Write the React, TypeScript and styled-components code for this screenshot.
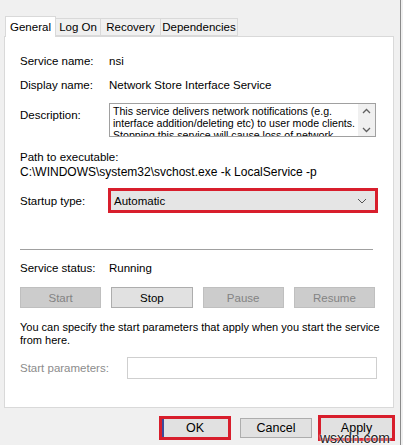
import React from "react";
import styled, { createGlobalStyle } from "styled-components";

const Global = createGlobalStyle`
  html, body { margin: 0; padding: 0; background: #f0f0f0; }
  body { font-family: "Liberation Sans", Arial, sans-serif; font-size: 11px; color: #000; }
`;

const Window = styled.div`
  position: relative;
  width: 401px;
  height: 445px;
  background: #f0f0f0;
  border-right: 1px solid #8a8a8a;
  padding-top: 16px;
  box-sizing: border-box;
  overflow: hidden;
`;

const TabStrip = styled.div`
  display: flex;
  align-items: flex-end;
  height: 20px;
  padding-left: 5px;
  position: relative;
  z-index: 2;
`;

const Tab = styled.div<{ $active?: boolean; $w: number }>`
  box-sizing: border-box;
  width: ${(p) => p.$w}px;
  height: ${(p) => (p.$active ? "21px" : "18px")};
  margin-bottom: ${(p) => (p.$active ? "-1px" : "0")};
  display: flex;
  align-items: center;
  justify-content: center;
  border: 1px solid #d9d9d9;
  border-bottom: ${(p) => (p.$active ? "none" : "1px solid #d9d9d9")};
  margin-left: -1px;
  background: ${(p) => (p.$active ? "#ffffff" : "#f0f0f0")};
  font-size: 11.5px;
  color: #000;
  white-space: nowrap;
`;

const Panel = styled.div`
  box-sizing: border-box;
  margin-left: 4px;
  width: 390px;
  height: 372px;
  background: #ffffff;
  border: 1px solid #d9d9d9;
  padding: 16px 18px 0 15px;
  display: flex;
  flex-direction: column;
`;

const Row = styled.div<{ $mt?: number; $align?: string }>`
  display: grid;
  grid-template-columns: 89px 1fr;
  align-items: ${(p) => p.$align || "center"};
  margin-top: ${(p) => p.$mt ?? 0}px;
  line-height: 16px;
`;

const Label = styled.div<{ $muted?: boolean; $pt?: number }>`
  color: ${(p) => (p.$muted ? "#8c8c8c" : "#000")};
  padding-top: ${(p) => p.$pt ?? 0}px;
  white-space: nowrap;
  font-size: 11.5px;
`;

const Value = styled.div`
  white-space: nowrap;
  font-size: 11.5px;
`;

const DescBox = styled.div`
  box-sizing: border-box;
  height: 34px;
  border: 1px solid #a0a0a0;
  display: flex;
  overflow: hidden;
  margin-right: -1px;
`;

const DescText = styled.div`
  flex: 1;
  padding: 1px 0 0 3px;
  line-height: 12px;
  font-size: 10.6px;
  overflow: hidden;
  white-space: nowrap;
`;

const ScrollBar = styled.div`
  width: 17px;
  background: #f0f0f0;
  display: flex;
  flex-direction: column;
  align-items: center;
  justify-content: space-between;
  padding: 4px 0 3px;
  box-sizing: border-box;
`;

const Block = styled.div<{ $mt?: number; $fs?: number }>`
  margin-top: ${(p) => p.$mt ?? 0}px;
  line-height: 15px;
  font-size: ${(p) => p.$fs ?? 11.5}px;
  white-space: nowrap;
`;

const Select = styled.div`
  box-sizing: border-box;
  height: 25px;
  border: 3px solid #d81e2c;
  margin-left: -1px;
  margin-right: -3px;
  background: #e5e5e5;
  display: flex;
  align-items: center;
  justify-content: space-between;
  padding: 0 8px 0 3px;
  font-size: 11.5px;
`;

const Separator = styled.div`
  margin-top: 36px;
  height: 1px;
  background: #a0a0a0;
  margin-right: 2px;
`;

const ButtonGrid = styled.div`
  display: grid;
  grid-template-columns: repeat(4, 1fr);
  column-gap: 10px;
  margin-top: 11px;
`;

const SvcButton = styled.div<{ $disabled?: boolean }>`
  box-sizing: border-box;
  height: 21px;
  display: flex;
  align-items: center;
  justify-content: center;
  background: ${(p) => (p.$disabled ? "#cccccc" : "#e1e1e1")};
  border: 1px solid ${(p) => (p.$disabled ? "#bfbfbf" : "#adadad")};
  color: ${(p) => (p.$disabled ? "#838383" : "#000")};
  font-size: 11.5px;
`;

const Para = styled.div`
  margin-top: 13px;
  line-height: 13px;
  font-size: 11px;
  white-space: nowrap;
`;

const ParamRow = styled.div`
  display: grid;
  grid-template-columns: 107px 1fr;
  align-items: center;
  margin-top: 10px;
`;

const ParamInput = styled.div`
  box-sizing: border-box;
  height: 22px;
  border: 1px solid #cfcfcf;
  background: #fff;
  margin-right: -2px;
`;

const Footer = styled.div`
  display: flex;
  justify-content: flex-end;
  align-items: center;
  padding-right: 5px;
  margin-top: 6px;
  height: 27px;
`;

const DlgButton = styled.div<{ $w: number; $h: number; $ring?: boolean; $ml?: number; $focus?: boolean }>`
  box-sizing: border-box;
  width: ${(p) => p.$w}px;
  height: ${(p) => p.$h}px;
  margin-left: ${(p) => p.$ml ?? 0}px;
  display: flex;
  align-items: center;
  justify-content: center;
  background: #e1e1e1;
  border: ${(p) => (p.$ring ? "3px solid #d81e2c" : "1px solid #adadad")};
  box-shadow: ${(p) => (p.$focus ? "inset 2px 0 0 #3b4a9a" : "none")};
  font-size: 12.5px;
  color: #000;
`;

const Watermark = styled.div`
  position: absolute;
  right: 10px;
  bottom: -1px;
  font-family: "Liberation Sans", Arial, sans-serif;
  font-size: 14px;
  color: #222;
  text-shadow: 0 0 2px #fff, 0 0 2px #fff;
  z-index: 5;
`;

const Chevron = ({ up }: { up?: boolean }) => (
  <svg width="9" height="6" viewBox="0 0 9 6">
    <path
      d={up ? "M1 5 L4.5 1.5 L8 5" : "M1 1 L4.5 4.5 L8 1"}
      fill="none"
      stroke="#606060"
      strokeWidth="1.3"
    />
  </svg>
);

export default function App() {
  return (
    <>
      <Global />
      <Window>
        <TabStrip>
          <Tab $active $w={51} style={{ marginLeft: 0 }}>General</Tab>
          <Tab $w={46}>Log On</Tab>
          <Tab $w={61}>Recovery</Tab>
          <Tab $w={78}>Dependencies</Tab>
        </TabStrip>
        <Panel>
          <Row>
            <Label>Service name:</Label>
            <Value>nsi</Value>
          </Row>
          <Row $mt={8}>
            <Label>Display name:</Label>
            <Value>Network Store Interface Service</Value>
          </Row>
          <Row $mt={10} $align="start">
            <Label $pt={4}>Description:</Label>
            <DescBox>
              <DescText>
                This service delivers network notifications (e.g.
                <br />
                interface addition/deleting etc) to user mode clients.
                <br />
                Stopping this service will cause loss of network
              </DescText>
              <ScrollBar>
                <Chevron up />
                <Chevron />
              </ScrollBar>
            </DescBox>
          </Row>
          <Block $mt={13}>Path to executable:</Block>
          <Block $fs={12}>C:\WINDOWS\system32\svchost.exe -k LocalService -p</Block>
          <Row $mt={8}>
            <Label>Startup type:</Label>
            <Select>
              <span>Automatic</span>
              <svg width="10" height="6" viewBox="0 0 10 6">
                <path d="M1 1 L5 5 L9 1" fill="none" stroke="#555" strokeWidth="1" />
              </svg>
            </Select>
          </Row>
          <Separator />
          <Row $mt={10}>
            <Label>Service status:</Label>
            <Value>Running</Value>
          </Row>
          <ButtonGrid>
            <SvcButton $disabled>Start</SvcButton>
            <SvcButton>Stop</SvcButton>
            <SvcButton $disabled>Pause</SvcButton>
            <SvcButton $disabled>Resume</SvcButton>
          </ButtonGrid>
          <Para>
            You can specify the start parameters that apply when you start the service
            <br />
            from here.
          </Para>
          <ParamRow>
            <Label $muted>Start parameters:</Label>
            <ParamInput />
          </ParamRow>
        </Panel>
        <Footer>
          <DlgButton $w={72} $h={24} $ring $focus>OK</DlgButton>
          <DlgButton $w={72} $h={20} $ml={9}>Cancel</DlgButton>
          <DlgButton $w={77} $h={26} $ring $ml={6}>Apply</DlgButton>
        </Footer>
        <Watermark>wsxdn.com</Watermark>
      </Window>
    </>
  );
}
